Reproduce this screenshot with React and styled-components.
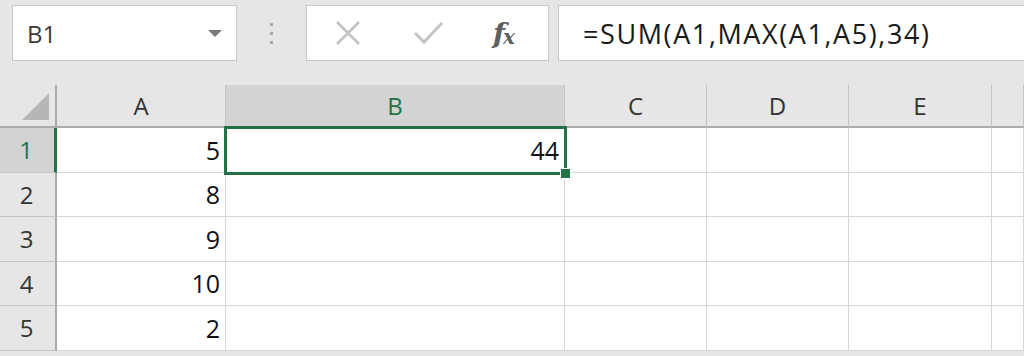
import React from 'react';
import styled, { createGlobalStyle } from 'styled-components';

const GlobalStyle = createGlobalStyle`
  html, body {
    margin: 0;
    padding: 0;
    background: #e6e6e6;
    overflow: hidden;
  }
  body {
    font-family: "Open Sans", "Liberation Sans", sans-serif;
  }
`;

const GREEN = '#217346';

// page
const Sheet = styled.div`
  width: 1024px;
  height: 356px;
  display: flex;
  flex-direction: column;
  background: #e6e6e6;
  overflow: hidden;
`;

// formula bar row
const Toolbar = styled.div`
  display: flex;
  align-items: stretch;
  height: 56px;
  padding: 5px 0 0 12px;
  margin-bottom: 24px;
`;

const NameBox = styled.div`
  box-sizing: border-box;
  width: 225px;
  display: flex;
  align-items: center;
  justify-content: space-between;
  padding: 0 14px 0 14px;
  background: #fff;
  border: 1px solid #c6c6c6;
  font-size: 24px;
  color: #3a3a3a;
`;

const Caret = styled.span`
  width: 0;
  height: 0;
  border-left: 7px solid transparent;
  border-right: 7px solid transparent;
  border-top: 7px solid #7a7a7a;
`;

const Grip = styled.div`
  width: 69px;
  display: flex;
  flex-direction: column;
  align-items: center;
  justify-content: center;
  gap: 6px;

  span {
    width: 3px;
    height: 3px;
    background: #a8a8a8;
  }
`;

const ButtonBox = styled.div`
  box-sizing: border-box;
  width: 243px;
  display: flex;
  align-items: center;
  padding-left: 28px;
  background: #fff;
  border: 1px solid #c6c6c6;
`;

const IconSlot = styled.div`
  width: ${p => p.w}px;
  display: flex;
  align-items: center;
  justify-content: flex-start;
`;

const Fx = styled.span`
  font-family: "DejaVu Serif", "Liberation Serif", serif;
  font-style: italic;
  font-weight: bold;
  font-size: 28px;
  color: #5f5f5f;
  letter-spacing: -2px;

  sub {
    font-size: 20px;
    vertical-align: baseline;
    position: relative;
    top: 1px;
  }
`;

const FormulaInput = styled.div`
  box-sizing: border-box;
  flex: 1;
  margin-left: 9px;
  display: flex;
  align-items: center;
  padding-left: 24px;
  background: #fff;
  border: 1px solid #c6c6c6;
  border-right: none;
  font-size: 27px;
  letter-spacing: 1.6px;
  color: #1a1a1a;
  white-space: nowrap;
`;

// spreadsheet grid
const Grid = styled.div`
  position: relative;
  display: grid;
  grid-template-columns: 57px 169px 339px 142px 142px 143px 1fr;
  grid-template-rows: 43px repeat(5, 44.5px);
  flex: 1;
`;

const Corner = styled.div`
  box-sizing: border-box;
  background: #e6e6e6;
  border-right: 2px solid #ababab;
  border-bottom: 2px solid #ababab;
  display: flex;
  align-items: flex-end;
  justify-content: flex-end;
  padding: 0 6px 6px 0;
`;

const ColHead = styled.div`
  box-sizing: border-box;
  display: flex;
  align-items: center;
  justify-content: center;
  background: ${p => (p.active ? '#d3d3d3' : '#e6e6e6')};
  color: ${p => (p.active ? GREEN : '#333')};
  border-right: 1px solid #c4c4c4;
  border-bottom: 2px solid ${p => (p.active ? GREEN : '#ababab')};
  font-size: 24px;
`;

const RowHead = styled.div`
  box-sizing: border-box;
  display: flex;
  align-items: center;
  justify-content: center;
  padding-right: 2px;
  background: ${p => (p.active ? '#d3d3d3' : '#e6e6e6')};
  color: ${p => (p.active ? GREEN : '#333')};
  border-right: ${p => (p.active ? `3px solid ${GREEN}` : '2px solid #ababab')};
  border-bottom: 1px solid #c4c4c4;
  font-size: 24px;
`;

const Cell = styled.div`
  box-sizing: border-box;
  display: flex;
  align-items: center;
  justify-content: flex-end;
  padding-right: 5px;
  background: #fff;
  border-right: 1px solid #d6d6d6;
  border-bottom: 1px solid #d6d6d6;
  font-size: 25px;
  color: #111;
`;

// active-cell outline sits over the grid
const Selection = styled.div`
  position: absolute;
  left: 224px;
  top: 41px;
  width: 343px;
  height: 49px;
  box-sizing: border-box;
  border: 3px solid ${GREEN};
  pointer-events: none;
`;

const FillHandle = styled.div`
  position: absolute;
  right: -7px;
  bottom: -7px;
  width: 9px;
  height: 9px;
  background: ${GREEN};
  border: 1px solid #fff;
`;

const columns = ['A', 'B', 'C', 'D', 'E', ''];
const values = [5, 8, 9, 10, 2];

const CloseIcon = () => (
  <svg width="26" height="26" viewBox="0 0 26 26">
    <path d="M2 2 L24 24 M24 2 L2 24" stroke="#c3c3c3" strokeWidth="2.6" fill="none" />
  </svg>
);

const CheckIcon = () => (
  <svg width="31" height="26" viewBox="0 0 31 26">
    <path d="M2 13 L11 22 L29 3" stroke="#c3c3c3" strokeWidth="3" fill="none" />
  </svg>
);

const App = () => (
  <>
    <GlobalStyle />
    <Sheet>
      <Toolbar>
        <NameBox>
          <span>B1</span>
          <Caret />
        </NameBox>
        <Grip>
          <span />
          <span />
          <span />
        </Grip>
        <ButtonBox>
          <IconSlot w={78}><CloseIcon /></IconSlot>
          <IconSlot w={80}><CheckIcon /></IconSlot>
          <IconSlot w={40}>
            <Fx>f<sub>x</sub></Fx>
          </IconSlot>
        </ButtonBox>
        <FormulaInput>=SUM(A1,MAX(A1,A5),34)</FormulaInput>
      </Toolbar>

      <Grid>
        <Corner>
          <svg width="27" height="27" viewBox="0 0 27 27">
            <polygon points="27,0 27,27 0,27" fill="#b6b6b6" />
          </svg>
        </Corner>
        {columns.map((c, i) => (
          <ColHead key={i} active={c === 'B'}>{c}</ColHead>
        ))}

        {values.map((v, r) => (
          <React.Fragment key={r}>
            <RowHead active={r === 0}>{r + 1}</RowHead>
            <Cell>{v}</Cell>
            <Cell>{r === 0 ? 44 : ''}</Cell>
            <Cell />
            <Cell />
            <Cell />
            <Cell />
          </React.Fragment>
        ))}

        <Selection>
          <FillHandle />
        </Selection>
      </Grid>
    </Sheet>
  </>
);

export default App;
